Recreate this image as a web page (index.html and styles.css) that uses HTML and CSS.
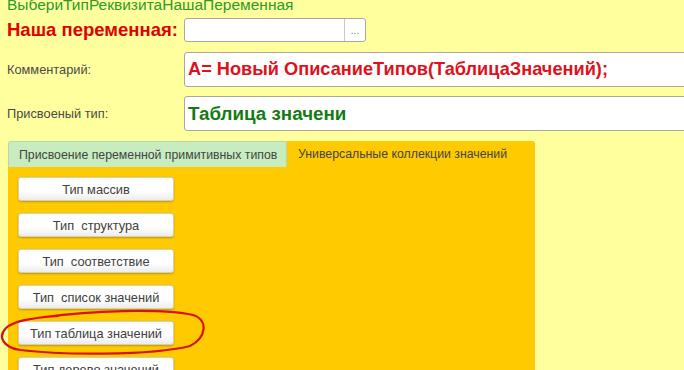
FILE: index.html
```html
<!DOCTYPE html>
<html lang="ru">
<head>
  <meta charset="UTF-8">
  <title>ВыбериТипРеквизитаНашаПеременная</title>
  <link rel="stylesheet" href="styles.css">
</head>
<body>
  <div class="page">
    <!-- Form title -->
    <div class="form-title">ВыбериТипРеквизитаНашаПеременная</div>

    <!-- Header fields -->
    <div class="field-row row-var">
      <label class="field-label label-big">Наша переменная:</label>
      <div class="input input-small">
        <span class="input-text"></span>
        <span class="input-btn">...</span>
      </div>
    </div>

    <div class="field-row row-tall">
      <label class="field-label">Комментарий:</label>
      <div class="input input-wide">
        <span class="input-text text-red">А= Новый ОписаниеТипов(ТаблицаЗначений);</span>
      </div>
    </div>

    <div class="field-row row-tall">
      <label class="field-label">Присвоеный тип:</label>
      <div class="input input-wide">
        <span class="input-text text-green">Таблица значени</span>
      </div>
    </div>

    <!-- Pages -->
    <div class="tabs">
      <div class="tab-strip">
        <div class="tab">Присвоение переменной примитивных типов</div>
        <div class="tab active">Универсальные коллекции значений</div>
      </div>
      <div class="tab-page">
        <button class="btn">Тип массив</button>
        <button class="btn">Тип&nbsp; структура</button>
        <button class="btn">Тип&nbsp; соответствие</button>
        <button class="btn">Тип&nbsp; список значений</button>
        <button class="btn">Тип таблица значений</button>
        <button class="btn">Тип дерево значений</button>
      </div>
    </div>
  </div>

  <!-- Hand-drawn marker around the button -->
  <svg class="marker" width="684" height="370" viewBox="0 0 684 370">
    <path d="M 44 317 C 90 311, 160 308, 193 315 C 209 320, 206 338, 190 346 C 150 356, 60 355, 20 350 C 2 347, -2 336, 6 328 C 14 321, 30 318, 58 316"
          fill="none" stroke="#d41414" stroke-width="2.2" stroke-linecap="round"/>
  </svg>
</body>
</html>
```

FILE: styles.css
```css
* {
  margin: 0;
  padding: 0;
  box-sizing: border-box;
}

html, body {
  width: 684px;
  height: 370px;
  overflow: hidden;
}

body {
  position: relative;
  background: #ffff9e;
  font-family: 'Liberation Sans', Arial, sans-serif;
  color: #444;
}

.page {
  padding: 0 0 0 7px;
}

.form-title {
  margin-top: -4px;
  height: 22px;
  font-size: 15.5px;
  line-height: 18px;
  color: #2b9a2b;
}

/* Header fields */
.field-row {
  display: flex;
  align-items: center;
}

.field-label {
  width: 177px;
  flex-shrink: 0;
  font-size: 12.8px;
  color: #4a4a4a;
}

.label-big {
  font-size: 18.5px;
  font-weight: 700;
  color: #e00000;
}

.row-var {
  height: 24px;
}

.row-tall {
  height: 35px;
  margin-top: 10px;
}

.row-tall + .row-tall {
  margin-top: 9px;
}

.input {
  display: flex;
  align-items: center;
  height: 100%;
  background: #fff;
  border: 1px solid #a8a8a0;
  border-radius: 3px;
}

.input-small {
  width: 182px;
}

.input-wide {
  flex: 1;
  margin-right: -10px;
}

.input-text {
  flex: 1;
  padding-left: 3px;
  font-size: 18.5px;
  font-weight: 700;
  white-space: nowrap;
}

.text-red {
  font-size: 18.2px;
  color: #e0101a;
}

.text-green {
  font-size: 18.8px;
  color: #147a14;
}

.input-btn {
  width: 21px;
  height: 100%;
  border-left: 1px solid #c8c8c0;
  font-size: 10px;
  line-height: 24px;
  text-align: center;
  color: #777;
}

/* Tabs */
.tabs {
  width: 527px;
  margin-top: 10px;
  margin-left: 1px;
}

.tab-strip {
  display: flex;
  height: 26px;
}

.tab {
  padding: 0 10px;
  font-size: 12.3px;
  line-height: 26px;
  color: #444;
  white-space: nowrap;
}

.tab:first-child {
  width: 279px;
  background: #c6ecc0;
  border: 1px solid #b4d8a8;
  border-bottom: none;
  border-radius: 3px 0 0 0;
}

.tab.active {
  flex: 1;
  padding-left: 11px;
  background: #ffcb00;
  border-radius: 0 3px 0 0;
}

.tab-page {
  display: flex;
  flex-direction: column;
  align-items: flex-start;
  gap: 12px;
  height: 220px;
  padding: 10px 0 0 10px;
  background: #ffcb00;
}

.btn {
  width: 156px;
  height: 24px;
  flex-shrink: 0;
  font-family: 'Liberation Sans', Arial, sans-serif;
  font-size: 12.8px;
  color: #404040;
  background: linear-gradient(#ffffff 60%, #ececec);
  border: 1px solid #d8d0b0;
  border-radius: 3px;
  box-shadow: 0 1px 2px rgba(0, 0, 0, 0.25);
}

/* Hand-drawn marker */
.marker {
  position: absolute;
  top: 0;
  left: 0;
  pointer-events: none;
}
```
